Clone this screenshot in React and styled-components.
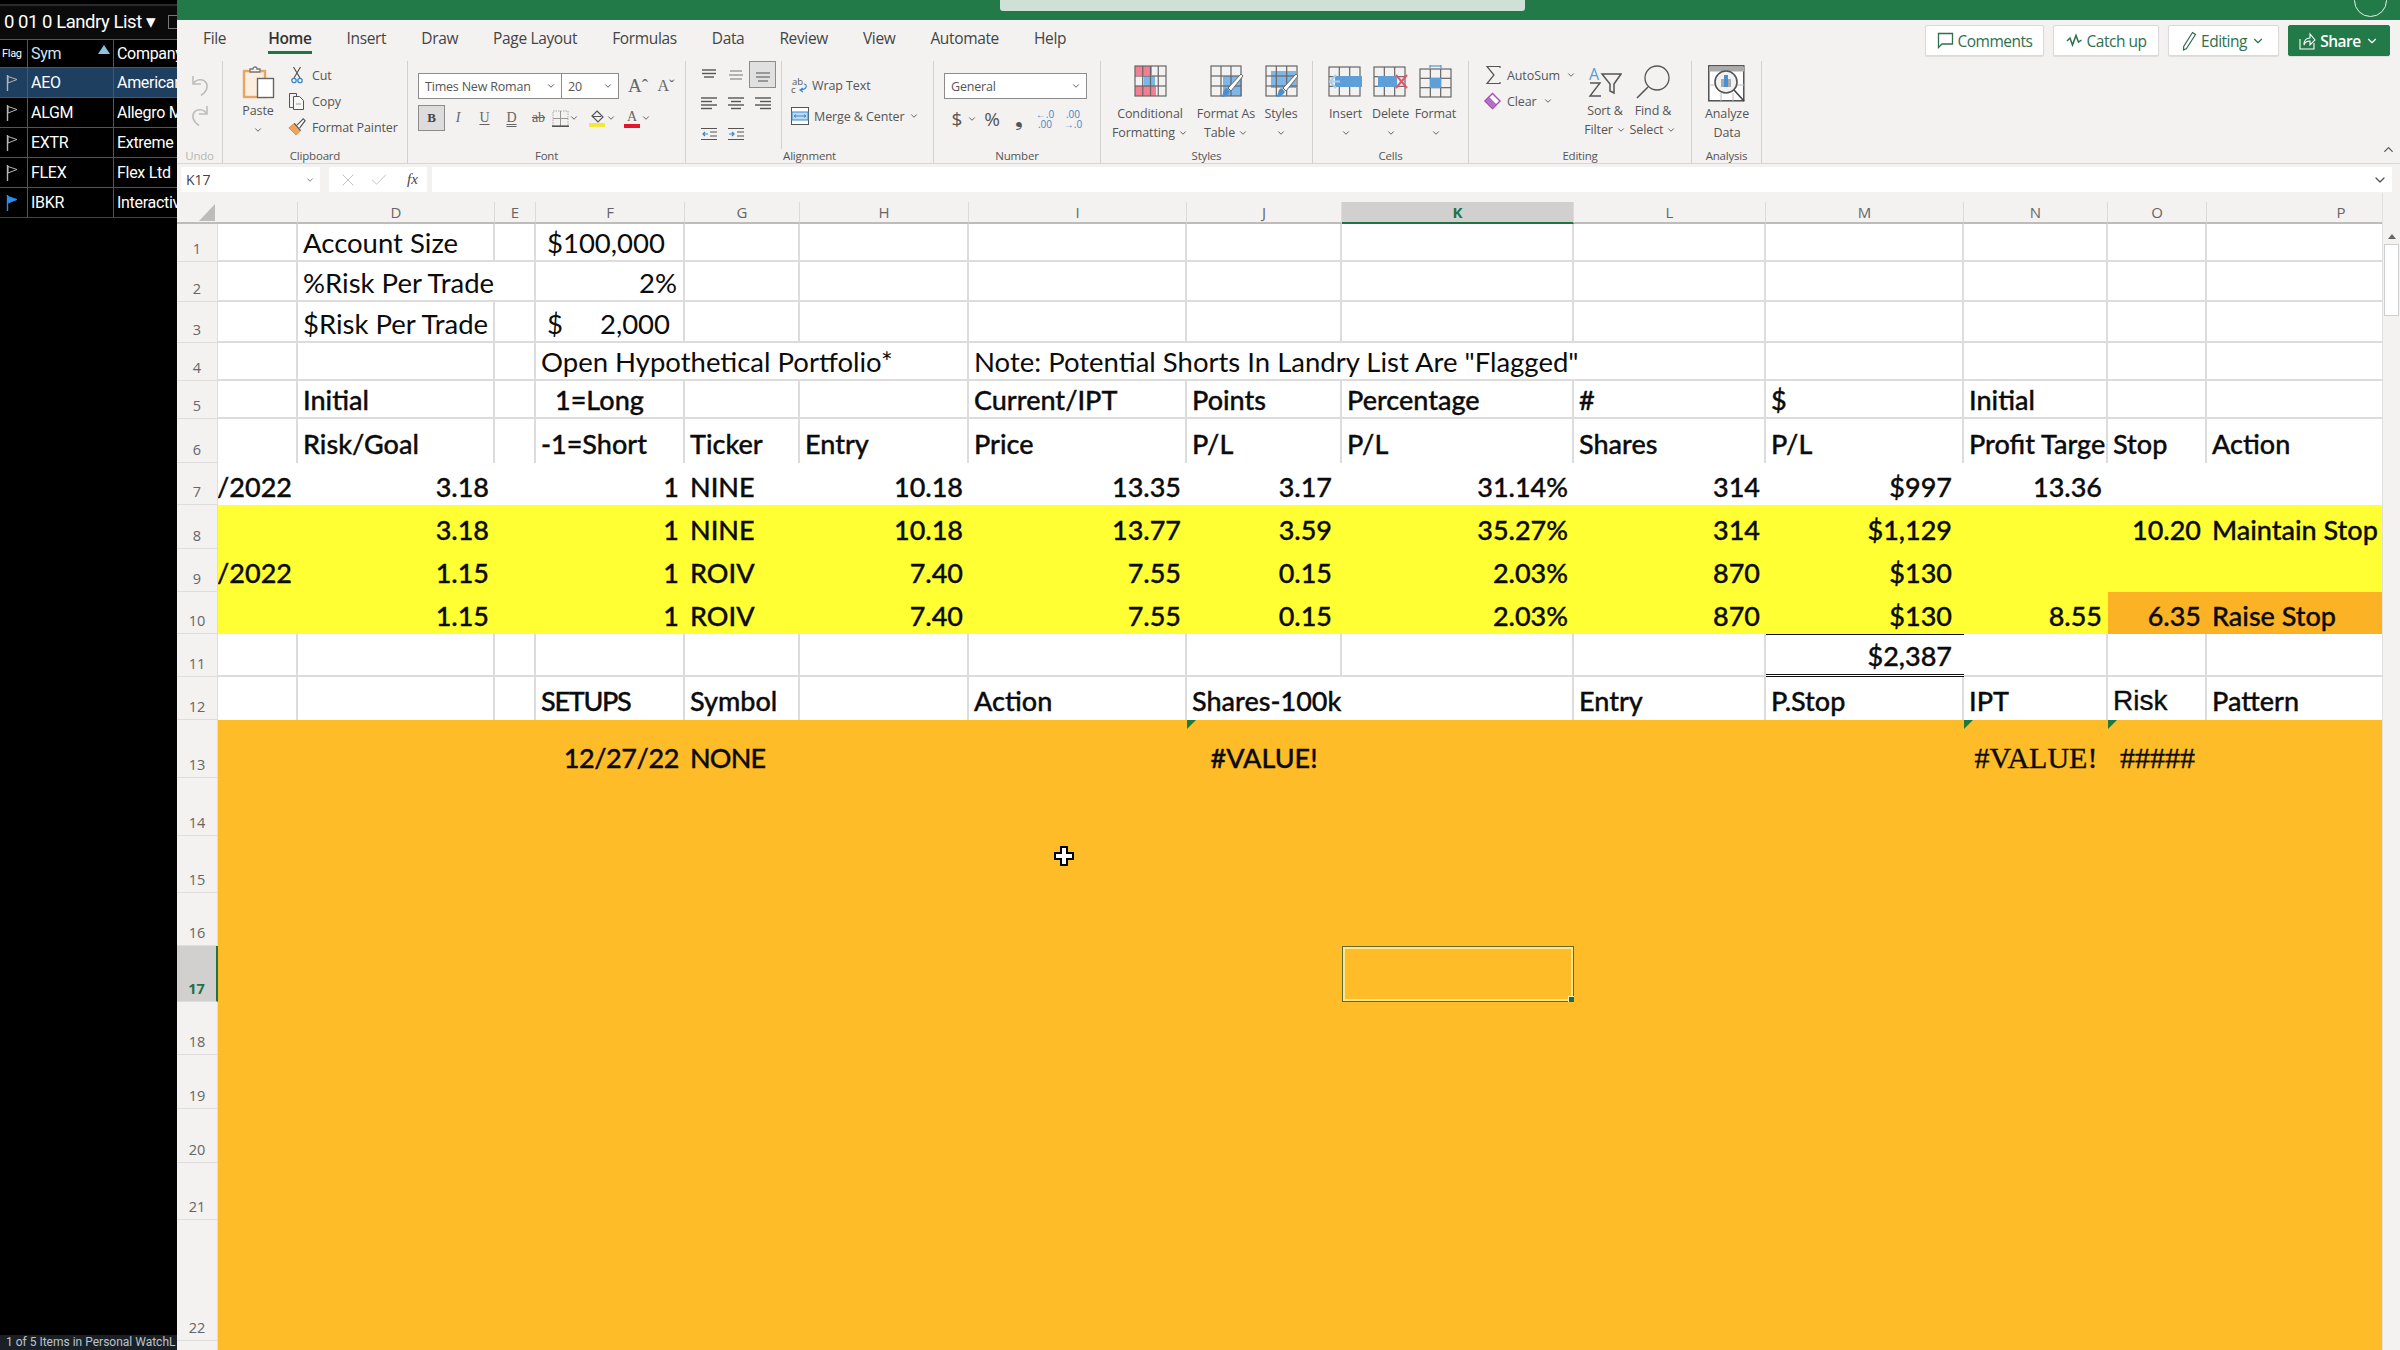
import React from "react";
import styled, { createGlobalStyle } from "styled-components";
import { ChevronDown, ChevronUp, X, Check } from "lucide-react";

const Global = createGlobalStyle`
  html, body { margin: 0; padding: 0; background: #000; }
  #root { width: 2400px; height: 1350px; overflow: hidden; }
  * { box-sizing: border-box; }
`;

const Page = styled.div`
  width: 2400px; height: 1350px; display: flex; overflow: hidden; position: relative;
  font-family: "Open Sans", "Liberation Sans", sans-serif;
`;

/* ---------- Left watchlist ---------- */
const Watch = styled.aside`
  width: 177px; flex: none; background: #000; color: #fff; display: flex; flex-direction: column;
  font-family: Roboto, "Liberation Sans", sans-serif; overflow: hidden;
`;
const WatchTop = styled.div`height: 6px; border-bottom: 2px solid #2c2c2c;`;
const WatchBar = styled.div`
  height: 33px; display: flex; align-items: center; justify-content: space-between; padding: 0 0 2px 4px;
  font-size: 18.5px; letter-spacing: -0.45px; white-space: nowrap; background: #0b0b0b;
`;
const WatchBox = styled.span`width: 12px; height: 14px; border: 1px solid #777; margin-right: -3px;`;
const WatchRow = styled.div`
  display: grid; grid-template-columns: 28px 86px 63px; height: ${p => p.$h}px;
  background: ${p => (p.$sel ? "#1e3f60" : "#000")}; border-top: 1px solid #555;
  font-size: 16px; letter-spacing: -0.3px;
`;
const WatchCell = styled.div`
  display: flex; align-items: center; padding-left: ${p => p.$pad ?? 3}px; overflow: hidden; white-space: nowrap;
  border-right: ${p => (p.$last ? "none" : "1px solid #555")}; color: ${p => p.$c || "#fff"};
  font-size: ${p => p.$fs || 16}px; position: relative;
`;
const SortArrow = styled.span`
  position: absolute; right: 3px; top: 5px; width: 0; height: 0;
  border-left: 6px solid transparent; border-right: 6px solid transparent; border-bottom: 9px solid #8fc4e0;
`;
const WatchFill = styled.div`flex: 1; border-top: 1px solid #444;`;
const WatchStatus = styled.div`
  height: 15px; background: #1b2026; color: #b9c6cf; font-size: 12px; line-height: 15px; padding-left: 6px;
  white-space: nowrap; overflow: hidden;
`;
const Flag = ({ on }) => (
  <svg width="12" height="16" viewBox="0 0 12 16">
    <path d="M1.500 0v16" stroke={on ? "#2a8cf0" : "#b5b5b5"} strokeWidth="1.4" />
    <path d="M2 1.500L11 4.500 2 8z" fill={on ? "#2a8cf0" : "none"} stroke={on ? "#2a8cf0" : "#b5b5b5"} />
  </svg>
);

/* ---------- Excel frame ---------- */
const Excel = styled.main`flex: 1; min-width: 0; display: flex; flex-direction: column; background: #f3f2f1;`;
const TitleBar = styled.header`
  height: 20px; flex: none; background: #217a48; display: flex; padding-left: 823px; overflow: hidden;
`;
const SearchBox = styled.div`width: 525px; height: 11px; background: #cfe0d5; border-radius: 0 0 3px 3px;`;
const Avatar = styled.span`
  width: 33px; height: 33px; border: 1px solid #e6f0ea; border-radius: 50%; margin: -16px 13px 0 auto;
`;

const TabRow = styled.nav`
  height: 41px; flex: none; display: flex; align-items: flex-start; padding-left: 26px;
`;
const Tab = styled.span`
  font-size: 15.500px; letter-spacing: -0.35px; color: #444; height: 34px; line-height: 36px; margin-right: ${p => p.$m}px;
  position: relative; font-weight: ${p => (p.$on ? 600 : 400)};
  ${p => p.$on && `color:#333; &::after{content:"";position:absolute;left:0;right:0;bottom:0;height:3px;background:#217346;}`}
`;
const Actions = styled.div`margin-left: auto; display: flex; gap: 9px; padding: 5px 10px 0 0;`;
const ActionBtn = styled.button`
  height: 31px; width: ${p => p.$w}px; border: 1px solid ${p => (p.$primary ? "#217a48" : "#dadada")};
  background: ${p => (p.$primary ? "#217a48" : "#fff")}; color: ${p => (p.$primary ? "#fff" : "#2f6f4e")};
  border-radius: 2px; display: flex; align-items: center; justify-content: center; gap: 4px; padding: 0;
  font: ${p => (p.$primary ? 600 : 400)} 15.500px "Open Sans", sans-serif; letter-spacing: -0.5px; box-shadow: 0 1px 1px #ddd;
`;

const Ribbon = styled.section`height: 102px; flex: none; display: flex; position: relative;`;
const Group = styled.div`
  width: ${p => p.$w}px; flex: none; display: flex; flex-direction: column; border-right: 1px solid #d3d1cf;
`;
const CollapseGroup = styled.div`flex: 1; display: flex; align-items: flex-end; justify-content: flex-end; padding: 0 4px 6px 0;`;
const GroupBody = styled.div`
  flex: 1; min-height: 0; display: flex; padding-left: ${p => p.$pad || 0}px;
  flex-direction: ${p => p.$col ? "column" : "row"};
`;
const GroupLabel = styled.div`
  height: 15px; line-height: 15px; font-size: 11.5px; color: ${p => p.$c || "#555"}; text-align: center; letter-spacing: -0.2px;
`;
const Stack = styled.div`
  display: flex; flex-direction: column; align-items: ${p => (p.$start ? "flex-start" : "center")};
  gap: ${p => p.$gap || 0}px; padding-top: ${p => p.$top || 0}px; width: ${p => p.$w}px; flex: none;
`;
const Small = styled.div`
  display: flex; align-items: center; height: 26px; gap: ${p => p.$gap ?? 6}px; font-size: 12.5px; color: #555; white-space: nowrap; letter-spacing: -0.1px;
  padding-left: ${p => p.$pad || 0}px;
`;
const IconSlot = styled.span`width: ${p => p.$w}px; display: inline-flex; justify-content: center; flex: none;`;
const Large = styled.div`
  width: ${p => p.$w}px; flex: none; display: flex; flex-direction: column; align-items: center; padding-top: 4px;
  font-size: 12.5px; line-height: 19px; color: #555; letter-spacing: -0.1px; white-space: nowrap;
`;
const LargeIcon = styled.div`height: 33px; margin-bottom: ${p => p.$gap ?? 6}px; display: flex; align-items: flex-start;`;
const LabelLine = styled.div`display: flex; align-items: center; gap: 3px; height: 19px;`;

const SelectBox = styled.div`
  height: 26px; width: ${p => p.$w}px; background: #fff; border: 1px solid #8c8c8c; display: flex; align-items: center; justify-content: space-between;
  font-size: 12.5px; color: #555; padding: 0 5px 0 6px; letter-spacing: -0.2px; flex: none;
  ${p => p.$join && "margin-left:-1px;"}
`;
const Row = styled.div`display: flex; align-items: center; margin-top: ${p => p.$mt || 0}px; margin-left: ${p => p.$ml || 0}px; gap: ${p => p.$gap || 0}px;`;
const BoldBtn = styled.span`
  width: 27px; height: 26px; background: #dcdcdc; border: 1px solid #8c8c8c; display: flex; align-items: center; justify-content: center;
  font: 700 13px "Liberation Serif", serif; color: #444;
`;
const FontGlyph = styled.span`
  width: ${p => p.$w}px; flex: none; text-align: center; font: ${p => p.$s || "normal"} ${p => p.$size || 14}px "Liberation Serif", serif; color: #666;
  margin-left: ${p => p.$ml || 0}px;
  text-decoration: ${p => p.$d || "none"}; text-underline-offset: 2px;
`;
const Glyph = styled.span`
  width: ${p => p.$w}px; flex: none; text-align: center; font: ${p => p.$size || 18}px "Open Sans", sans-serif; line-height: ${p => p.$lh || "normal"}; color: ${p => p.$c || "#555"};
`;
const Spacer = styled.span`width: ${p => p.$w}px; flex: none;`;
const ColorBar = styled.span`display:block;width:16px;height:4px;background:${p => p.$c};margin-top:-1px;`;
const ColorBtn = styled.span`display:flex;flex-direction:column;align-items:center;width:18px;flex:none;`;
const AlignGrid = styled.div`
  display: grid; grid-template-columns: repeat(3, 27px); grid-template-rows: 28px 30px 30px; width: 81px; flex: none;
`;
const AlignCell = styled.span`
  display: flex; align-items: center; justify-content: center;
  ${p => p.$on && "background:#e0e0e0;border:1px solid #8c8c8c;height:27px;padding-top:5px;"}
`;
const VRule = styled.span`width: 1px; height: 88px; background: #d3d1cf; margin: 0 8px 0 5px; flex: none;`;

const Chev = ({ s = 10, c = "#555" }) => <ChevronDown size={s} color={c} strokeWidth={2.2} />;

/* ---------- Icons ---------- */
const Icon = ({ w, h, children, vb }) => <svg width={w} height={h} viewBox={vb || `0 0 ${w} ${h}`} fill="none">{children}</svg>;
const UndoIcon = ({ flip }) => (
  <Icon w={20} h={26}><g transform={flip ? "matrix(-1 0 0 1 20 0)" : undefined} stroke="#bdbdbd" strokeWidth="1.6">
    <path d="M3 4v8h8" /><path d="M3.5 11.5C6 7 13 6.5 16 10.5c2.5 4 .5 10-5 13" /></g></Icon>
);
const PasteIcon = () => (
  <Icon w={33} h={34}>
    <rect x="2" y="6" width="21" height="26" fill="#fbeedd" stroke="#e9a55f" strokeWidth="2.4" />
    <path d="M8 7V4h3a2 2 0 014 0h3v3z" fill="#f3f2f1" stroke="#777" strokeWidth="1.3" />
    <rect x="15.5" y="13.5" width="16" height="19" fill="#fff" stroke="#666" strokeWidth="1.4" />
  </Icon>
);
const CutIcon = () => (
  <Icon w={12} h={18}>
    <path d="M2.5 1l6.5 11M9.5 1L3 12" stroke="#555" strokeWidth="1.2" />
    <circle cx="3" cy="14.5" r="2.2" stroke="#3b88c9" strokeWidth="1.3" /><circle cx="9" cy="14.5" r="2.2" stroke="#3b88c9" strokeWidth="1.3" />
  </Icon>
);
const CopyIcon = () => (
  <Icon w={18} h={18}>
    <path d="M1.5 1.5h7v14h-7z" stroke="#555" />
    <path d="M5.5 4.5h6l4 4v9h-10z" fill="#f8f8f8" stroke="#555" /><path d="M8 12h5" stroke="#999" />
  </Icon>
);
const PainterIcon = () => (
  <Icon w={20} h={20}>
    <path d="M1 11l6-5 7 8-5 5z" fill="#f0a35c" stroke="#e38a3a" /><path d="M7 6l7 8" stroke="#555" strokeWidth="1.3" />
    <path d="M10 8l7-7 2 2-6 8" stroke="#555" strokeWidth="1.3" fill="#fff" />
  </Icon>
);
const BorderIcon = () => (
  <Icon w={17} h={17}>
    <rect x="1" y="1" width="15" height="15" stroke="#aaa" strokeDasharray="1.5 1" /><path d="M8.5 1v15M1 8.5h15" stroke="#999" /><path d="M0 16.2h17" stroke="#444" strokeWidth="1.4" />
  </Icon>
);
const FillIcon = () => (
  <Icon w={16} h={14}><path d="M8 1l6 6-5 5-6-6z" stroke="#555" strokeWidth="1.2" /><path d="M3 6.5h9" stroke="#555" /></Icon>
);
const Lines = ({ rows, on }) => (
  <Icon w={18} h={14}>
    {rows.map(([x1, x2, y, c], i) => <path key={i} d={`M${x1} ${y}H${x2}`} stroke={c || (on ? "#666" : "#555")} strokeWidth="1.4" />)}
  </Icon>
);
const Indent = ({ right }) => (
  <Icon w={18} h={14}>
    <path d="M1 1.5h16M1 12.5h16M10 5h7M10 9h7" stroke="#555" strokeWidth="1.2" />
    {right ? <path d="M2 7h5M5 5l2 2-2 2" stroke="#3b88c9" strokeWidth="1.2" /> : <path d="M8 7H3M5 5L3 7l2 2" stroke="#3b88c9" strokeWidth="1.2" />}
  </Icon>
);
const WrapIcon = () => (
  <svg width="18" height="17" viewBox="0 0 18 17">
    <text x="1" y="8" fontSize="9.5" fill="#555" fontFamily="Open Sans">ab</text>
    <text x="0" y="16" fontSize="9.5" fill="#555" fontFamily="Open Sans">c</text>
    <path d="M13 7c3 0 4 5-3 6M12 11l-3 2 3 2" stroke="#3b88c9" fill="none" strokeWidth="1.2" />
  </svg>
);
const MergeIcon = () => (
  <Icon w={18} h={18}>
    <rect x=".5" y=".5" width="17" height="17" stroke="#555" fill="#fff" /><rect x="1" y="5" width="16" height="8" fill="#bcdcf3" stroke="#3b88c9" />
    <path d="M3 9h12M5 7.5L3 9l2 1.500M13 7.500L15 9l-2 1.500" stroke="#3b88c9" />
  </Icon>
);
const gridLines = (x, y, w, h, cols, rows, c = "#666") => (
  <g stroke={c} strokeWidth="1.2">
    <rect x={x} y={y} width={w} height={h} />
    {Array.from({ length: cols - 1 }, (_, i) => <path key={`c${i}`} d={`M${x + (w * (i + 1)) / cols} ${y}v${h}`} />)}
    {Array.from({ length: rows - 1 }, (_, i) => <path key={`r${i}`} d={`M${x} ${y + (h * (i + 1)) / rows}h${w}`} />)}
  </g>
);
const Brush = () => (
  <g>
    <path d="M20 27c-2 2-3 5-9 5 3-2 1-8 6-9z" fill="#4a90d0" /><path d="M18 23L31 9l2 2-12 15z" fill="#fff" stroke="#666" />
  </g>
);
const CFIcon = () => (
  <Icon w={33} h={33}>
    <path d="M1 1h17v9H1zM1 21h21v10H1z" fill="#f47f92" /><path d="M10 11h11v10H10z" fill="#7db6e8" />
    {gridLines(1, 1, 31, 30, 4, 3)}
  </Icon>
);
const TableIcon = () => (
  <Icon w={33} h={33}><path d="M13 11h19v20H13z" fill="#7db6e8" />{gridLines(1, 1, 30, 30, 3, 3)}<Brush /></Icon>
);
const StylesIcon = () => (
  <Icon w={33} h={33}><path d="M6 6h25v17H6z" fill="#7db6e8" />{gridLines(1, 1, 31, 30, 3, 3)}<Brush /></Icon>
);
const InsertIcon = () => (
  <Icon w={35} h={33}>
    {gridLines(1, 2, 31, 29, 3, 3)}<path d="M7 11h27v11H7z" fill="#5f9fd8" />
    <path d="M12 16.500H3M8 10l-6 6.500 6 6.500" stroke="#a8cff0" strokeWidth="2" />
  </Icon>
);
const DeleteIcon = () => (
  <Icon w={35} h={33}>
    {gridLines(1, 2, 31, 29, 3, 3)}<path d="M5 11h19v11H5z" fill="#5f9fd8" /><path d="M23 10l11 13M34 10L23 23" stroke="#e0566a" strokeWidth="2" />
  </Icon>
);
const FormatIcon = () => (
  <Icon w={33} h={33}>
    <path d="M11 1h11M11 -1v4M22 -1v4" stroke="#3b88c9" />
    {gridLines(1, 4, 31, 28, 3, 3)}<path d="M11 13h11v10H11z" fill="#5f9fd8" />
  </Icon>
);
const SigmaIcon = () => <Icon w={16} h={20}><path d="M15 3V1.500H2L9 10l-7 8.500h13V17" stroke="#555" strokeWidth="1.2" /></Icon>;
const EraserIcon = () => (
  <Icon w={18} h={18}><path d="M1 9l8-8 8 8-8 8z" fill="#fff" stroke="#a24bb5" strokeWidth="1.5" /><path d="M1 9l4-4 8 8-4 4z" fill="#b96cc8" stroke="#a24bb5" /></Icon>
);
const SortIcon = () => (
  <svg width="34" height="34" viewBox="0 0 34 34" fill="none">
    <text x="1" y="15" fontSize="16" fill="#5a9bd5" fontFamily="Open Sans">A</text>
    <path d="M2 18h10L2 31h11" stroke="#555" strokeWidth="1.4" />
    <path d="M14 9h19l-7 10v9l-4-2v-7z" stroke="#555" strokeWidth="1.5" />
  </svg>
);
const FindIcon = () => <Icon w={34} h={34}><circle cx="21" cy="13" r="12" stroke="#555" strokeWidth="1.3" /><path d="M12 22L1 33" stroke="#555" strokeWidth="1.6" /></Icon>;
const AnalyzeIcon = () => (
  <Icon w={38} h={37}>
    <rect x=".8" y=".8" width="35" height="35" stroke="#444" strokeWidth="1.4" fill="#fff" /><path d="M1 4h35" stroke="#aaa" strokeWidth="5" />
    <path d="M1 20h35M13 28v8M25 28v8" stroke="#bbb" />
    <circle cx="18" cy="17" r="11" fill="#f3f2f1" stroke="#555" strokeWidth="1.6" />
    <path d="M13 14h3v8h-3zM20 14h3v8h-3z" fill="#aaa" /><path d="M16 10h4v12h-4z" fill="#4a90d0" />
    <path d="M26 25l10 11" stroke="#444" strokeWidth="1.6" />
  </Icon>
);
const CommentIcon = () => <Icon w={17} h={17}><path d="M1.500 1.500h14v10.500H5l-3.500 3.500z" stroke="#2f6f4e" strokeWidth="1.3" /></Icon>;
const PulseIcon = () => <Icon w={17} h={15}><path d="M1 8l3-3 2.500 7L10 2.500 12.500 9l3-2" stroke="#2f6f4e" strokeWidth="1.5" /></Icon>;
const PenIcon = () => <Icon w={15} h={20}><path d="M10.500 1.500l3 2-9 14-3 1.500.2-3.500z" stroke="#2f6f4e" strokeWidth="1.2" /></Icon>;
const ShareIcon = () => <Icon w={17} h={19}><path d="M1 8v10h14v-6" stroke="#fff" strokeWidth="1.1" /><path d="M5 14c0-5 3-7 6-7V3l5 6-5 5v-4c-3 0-5 1-6 4z" stroke="#fff" strokeWidth="1.1" /></Icon>;

/* ---------- Formula bar ---------- */
const FormulaBar = styled.div`
  height: 30px; flex: none; display: flex; align-items: flex-start; padding: 3px 8px 0 4px; gap: 5px; border-top: 1px solid #d9d8d7; background: #f3f2f1;
`;
const NameBox = styled.div`
  width: 139px; height: 25px; background: #fff; display: flex; align-items: center; justify-content: space-between; padding: 0 5px 0 5px; font-size: 14px; color: #444;
`;
const FxBox = styled.div`
  width: 98px; margin-left: 4px; height: 25px; background: #fff; display: flex; align-items: center; gap: 11px; padding-left: 9px; color: #c4c4c4;
`;
const FxText = styled.span`font: italic 15px "Liberation Serif", serif; color: #444; margin-left: 7px;`;
const FormulaInput = styled.div`flex: 1; height: 25px; background: #fff; display: flex; align-items: center; justify-content: flex-end; padding-right: 4px;`;

/* ---------- Sheet ---------- */
const Content = styled.div`flex: 1; min-height: 0; display: flex; position: relative;`;
const columns = [["C", 80], ["D", 197], ["E", 41], ["F", 149], ["G", 115], ["H", 169], ["I", 218], ["J", 155], ["K", 232], ["L", 192], ["M", 198], ["N", 144], ["O", 99], ["P", 175]];
const Sheet = styled.div`
  width: 2205px; flex: none; display: grid; overflow: hidden;
  grid-template-columns: ${p => p.$cols};
  grid-template-rows: ${p => p.$rows};
`;
const Corner = styled.div`
  padding: 11px 0 0 22px; border-bottom: 2px solid #bdbcbb;
`;
const ColHead = styled.div`
  margin-top: 9px; font-size: 15px; line-height: 20px; text-align: center; color: ${p => (p.$on ? "#217346" : "#666")}; font-weight: ${p => (p.$on ? 700 : 400)};
  background: ${p => (p.$on ? "#d2d0ce" : "transparent")}; border-right: ${p => (p.$last ? "none" : "1px solid #dcdbda")};
  border-bottom: 2px solid ${p => (p.$on ? "#217346" : "#bdbcbb")};
`;
const OverflowLetter = styled.span`position: absolute; left: ${p => p.$x}px; top: 9px; width: 20px; text-align: center; font-size: 15px; line-height: 20px; color: #666;`;
const RowHead = styled.div`
  display: flex; align-items: flex-end; justify-content: center; padding-bottom: 2px; font-size: 14.500px; line-height: 20px;
  color: ${p => (p.$on ? "#217346" : "#666")}; font-weight: ${p => (p.$on ? 700 : 400)};
  background: ${p => (p.$on ? "#d2d0ce" : "#f3f2f1")};
  border-bottom: 1px solid #dedddc; border-right: ${p => (p.$on ? "2px solid #217346" : "1px solid #dedddc")};
`;
const fills = { plain: "#fff", white: "#fff", yellow: "#ffff33", orange: "#fdbc28", deep: "#fbb224" };
const Cell = styled.div`
  grid-column: span ${p => p.$span || 1}; min-width: 0; display: flex; align-items: flex-end; position: relative; white-space: nowrap;
  overflow: ${p => (p.$open ? "visible" : "hidden")};
  justify-content: ${p => ({ right: "flex-end", center: "center", between: "space-between" }[p.$a] || "flex-start")};
  padding: 0 ${p => p.$pr ?? 6}px ${p => p.$pb ?? 2}px ${p => p.$pl ?? 5}px;
  background: ${p => fills[p.$fill]}; color: #0c0c0c;
  font-family: ${p => p.$serif ? '"Liberation Serif", serif' : p.$arial ? '"Liberation Sans", sans-serif' : 'Lato, Carlito, sans-serif'};
  font-size: ${p => p.$fs || 27}px; line-height: 30px; letter-spacing: ${p => p.$ls || 0}px; font-weight: ${p => (p.$strong ? 500 : 400)};
  ${p => p.$strong && "-webkit-text-stroke: 0.35px #0c0c0c;"}
  border-right: ${p => (p.$grid ? "2px solid #dcdcdc" : "none")};
  border-bottom: ${p => (p.$hline ? "2px solid #dcdcdc" : "none")};
  ${p => p.$total && "border-top: 1px solid #111; border-bottom: 3px double #111; border-right: none;"}
`;
const ErrorMark = styled.i`
  position: absolute; left: 0; top: 0; width: 0; height: 0;
  border-top: 9px solid #1f7a3a; border-right: 9px solid transparent;
`;
const Selection = styled.div`
  position: absolute; inset: 0; border: 1px solid #5f6a2c; box-shadow: inset 0 0 0 2px #fde68a;
  &::after { content: ""; position: absolute; right: -3px; bottom: -3px; width: 6px; height: 6px; background: #1c6b55; border: 1px solid #fff3b8; }
`;
const Scrollbar = styled.div`
  flex: 1; display: flex; flex-direction: column; padding-top: 31px; background: #f3f2f1; border-left: 1px solid #e0e0e0;
`;
const ScrollUp = styled.div`
  height: 15px; display: flex; align-items: center; justify-content: center; margin-top: 5px;
  &::before { content: ""; border-left: 4px solid transparent; border-right: 4px solid transparent; border-bottom: 5px solid #666; }
`;
const ScrollThumb = styled.div`height: 72px; background: #fff; border: 1px solid #cfcfcf; margin: 0 1px;`;
const Cursor = styled.svg`position: absolute; left: 1054px; top: 846px;`;

const r = v => ({ v, a: "right" });
const j = v => ({ v, a: "right", pr: 10 });
const m = v => ({ v, a: "right", pr: 12 });
const rowsData = [
  { n: 1, h: 38, kind: "plain", fs: 27.5, cells: { D: "Account Size", F: { v: "$100,000", pl: 11 } } },
  { n: 2, h: 40, kind: "plain", fs: 27.5, cells: { D: { v: "%Risk Per Trade", span: 2 }, F: r("2%") } },
  { n: 3, h: 41, kind: "plain", fs: 27.5, cells: { D: "$Risk Per Trade", F: { v: ["$", "2,000"], a: "between", pl: 11, pr: 13 } } },
  { n: 4, h: 38, kind: "plain", fs: 27.5, cells: { F: { v: "Open Hypothetical Portfolio*", span: 3 }, I: { v: 'Note: Potential Shorts In Landry List Are "Flagged"', span: 4 } } },
  { n: 5, h: 38, kind: "plain", strong: 1, cells: { D: "Initial", F: { v: "1=Long", pl: 19 }, I: "Current/IPT", J: "Points", K: "Percentage", L: "#", M: "$", N: "Initial" } },
  { n: 6, h: 44, kind: "plain", strong: 1, pb: 4, nobottom: 1, cells: { D: "Risk/Goal", F: "-1=Short", G: "Ticker", H: "Entry", I: "Price", J: "P/L", K: "P/L", L: "Shares", M: "P/L", N: "Profit Targe", O: "Stop", P: "Action" } },
  { n: 7, h: 42, kind: "white", strong: 1, pb: 3, cells: { C: r("/2022"), D: r("3.18"), F: r("1"), G: "NINE", H: r("10.18"), I: r("13.35"), J: j("3.17"), K: r("31.14%"), L: r("314"), M: m("$997"), N: r("13.36") } },
  { n: 8, h: 44, kind: "yellow", strong: 1, pb: 4, cells: { D: r("3.18"), F: r("1"), G: "NINE", H: r("10.18"), I: r("13.77"), J: j("3.59"), K: r("35.27%"), L: r("314"), M: m("$1,129"), O: r("10.20"), P: { v: "Maintain Stop", pr: 0 } } },
  { n: 9, h: 43, kind: "yellow", strong: 1, pb: 4, cells: { C: r("/2022"), D: r("1.15"), F: r("1"), G: "ROIV", H: r("7.40"), I: r("7.55"), J: j("0.15"), K: r("2.03%"), L: r("870"), M: m("$130") } },
  { n: 10, h: 42, kind: "yellow", strong: 1, pb: 3, cells: { D: r("1.15"), F: r("1"), G: "ROIV", H: r("7.40"), I: r("7.55"), J: j("0.15"), K: r("2.03%"), L: r("870"), M: m("$130"), N: r("8.55"), O: { ...r("6.35"), fill: "deep" }, P: { v: "Raise Stop", fill: "deep" } } },
  { n: 11, h: 43, kind: "plain", strong: 1, pb: 3, cells: { M: { ...m("$2,387"), total: 1 } } },
  { n: 12, h: 43, kind: "plain", strong: 1, pb: 4, nobottom: 1, cells: { F: { v: "SETUPS", ls: -1.3 }, G: "Symbol", I: "Action", J: { v: "Shares-100k", span: 2 }, L: "Entry", M: "P.Stop", N: "IPT", O: { v: "Risk", arial: 1, fs: 28 }, P: "Pattern" } },
  { n: 13, h: 58, kind: "orange", strong: 1, cells: { F: { ...r("12/27/22"), bump: 1, ls: -0.4 }, G: { v: "NONE", bump: 1, ls: -0.8 }, J: { v: "#VALUE!", a: "center", mark: 1, bump: 1 }, N: { v: "#VALUE!", a: "center", serif: 1, fs: 30, mark: 1, bump: 1, pl: 0, pr: 0 }, O: { v: "#####", a: "center", serif: 1, fs: 30, mark: 1, bump: 1, pl: 0, pr: 0 } } },
  { n: 14, h: 58, kind: "orange", cells: {} },
  { n: 15, h: 57, kind: "orange", cells: {} },
  { n: 16, h: 53, kind: "orange", cells: {} },
  { n: 17, h: 56, kind: "orange", cells: { K: { sel: 1 } } },
  { n: 18, h: 53, kind: "orange", cells: {} },
  { n: 19, h: 54, kind: "orange", cells: {} },
  { n: 20, h: 54, kind: "orange", cells: {} },
  { n: 21, h: 57, kind: "orange", cells: {} },
  { n: 22, h: 121, kind: "orange", cells: {} },
  { n: "", h: 10, kind: "orange", cells: {} },
];
const BumpText = styled.span`position: relative; top: -3px;`;

function SheetRow({ row }) {
  const out = [<RowHead key="h" $on={row.n === 17}>{row.n}</RowHead>];
  let skip = 0;
  columns.forEach(([col]) => {
    if (skip > 0) { skip--; return; }
    const raw = row.cells[col];
    const c = typeof raw === "string" ? { v: raw } : raw || {};
    const span = c.span || 1;
    skip = span - 1;
    const isPlain = row.kind === "plain";
    const val = Array.isArray(c.v) ? c.v.map(t => <span key={t}>{t}</span>) : c.v;
    out.push(
      <Cell key={col} $span={span} $a={c.a} $pl={c.pl} $pr={c.pr} $pb={row.pb} $fill={c.fill || row.kind} $ls={c.ls}
        $strong={row.strong} $grid={isPlain && !c.total && col !== "P"} $hline={isPlain && !row.nobottom} $total={c.total}
        $serif={c.serif} $arial={c.arial} $fs={c.fs || row.fs} $open={c.sel}>
        {c.mark && <ErrorMark />}
        {c.sel && <Selection />}
        {c.bump ? <BumpText>{val}</BumpText> : val}
      </Cell>
    );
  });
  return out;
}

const iconLines = {
  top: [[2, 16, 2], [2, 16, 5.500], [4, 14, 9, "#555"]],
  mid: [[3, 15, 3, "#999"], [2, 16, 7, "#999"], [3, 15, 11, "#999"]],
  bot: [[2, 16, 3, "#777"], [2, 16, 7, "#777"], [4, 14, 11, "#777"]],
  left: [[1, 17, 1], [1, 12, 4.500], [1, 17, 8], [1, 12, 11.500]],
  center: [[1, 17, 1], [4, 14, 4.500], [1, 17, 8], [4, 14, 11.500]],
  right: [[1, 17, 1], [6, 17, 4.500], [1, 17, 8], [6, 17, 11.500]],
};

export default function App() {
  const rowTemplate = ["31px", ...rowsData.map(x => `${x.h}px`)].join(" ");
  const colTemplate = ["41px", ...columns.map(c => `${c[1]}px`)].join(" ");
  return (
    <Page>
      <Global />
      <Watch>
        <WatchTop />
        <WatchBar>0 01 0 Landry List ▾<WatchBox /></WatchBar>
        <WatchRow $h={28}>
          <WatchCell $fs={11} $pad={2}>Flag</WatchCell>
          <WatchCell $c="#cfe3ee">Sym<SortArrow /></WatchCell>
          <WatchCell $last>Company</WatchCell>
        </WatchRow>
        {[["AEO", "American", 1], ["ALGM", "Allegro M"], ["EXTR", "Extreme"], ["FLEX", "Flex Ltd"], ["IBKR", "Interactiv", 0, 1]].map(([s, c, sel, on]) => (
          <WatchRow key={s} $h={30} $sel={sel}>
            <WatchCell $pad={6}><Flag on={on} /></WatchCell>
            <WatchCell>{s}</WatchCell>
            <WatchCell $last>{c}</WatchCell>
          </WatchRow>
        ))}
        <WatchFill />
        <WatchStatus>1 of 5 Items in Personal WatchL</WatchStatus>
      </Watch>

      <Excel>
        <TitleBar><SearchBox /><Avatar /></TitleBar>
        <TabRow>
          <Tab $m={42}>File</Tab><Tab $on $m={35}>Home</Tab><Tab $m={35}>Insert</Tab><Tab $m={35}>Draw</Tab><Tab $m={35}>Page Layout</Tab>
          <Tab $m={35}>Formulas</Tab><Tab $m={35}>Data</Tab><Tab $m={35}>Review</Tab><Tab $m={35}>View</Tab><Tab $m={35}>Automate</Tab><Tab $m={0}>Help</Tab>
          <Actions>
            <ActionBtn $w={119}><CommentIcon />Comments</ActionBtn>
            <ActionBtn $w={106}><PulseIcon />Catch up</ActionBtn>
            <ActionBtn $w={111}><PenIcon />Editing <ChevronDown size={14} color="#2f6f4e" /></ActionBtn>
            <ActionBtn $w={102} $primary><ShareIcon />Share <ChevronDown size={14} color="#fff" /></ActionBtn>
          </Actions>
        </TabRow>

        <Ribbon>
          <Group $w={46}>
            <GroupBody><Stack $w={46} $top={11} $gap={4}><UndoIcon /><UndoIcon flip /></Stack></GroupBody>
            <GroupLabel $c="#b5b5b5">Undo</GroupLabel>
          </Group>
          <Group $w={185}>
            <GroupBody $pad={17}>
              <Large $w={36}>
                <LargeIcon $gap={3}><PasteIcon /></LargeIcon>
                <LabelLine>Paste</LabelLine><LabelLine><Chev /></LabelLine>
              </Large>
              <Stack $w={120} $top={1} $start>
                <Small $gap={6} $pad={12}><IconSlot $w={18}><CutIcon /></IconSlot>Cut</Small>
                <Small $gap={6} $pad={12}><IconSlot $w={18}><CopyIcon /></IconSlot>Copy</Small>
                <Small $gap={6} $pad={12}><IconSlot $w={18}><PainterIcon /></IconSlot>Format Painter</Small>
              </Stack>
            </GroupBody>
            <GroupLabel>Clipboard</GroupLabel>
          </Group>
          <Group $w={278}>
            <GroupBody $pad={10} $col>
              <Row $mt={12}>
                <SelectBox $w={144}>Times New Roman <Chev /></SelectBox>
                <SelectBox $w={58} $join>20 <Chev /></SelectBox>
                <FontGlyph $w={30} $size={19} $ml={4}>Aˆ</FontGlyph>
                <FontGlyph $w={26} $size={16}>Aˇ</FontGlyph>
              </Row>
              <Row $mt={6}>
                <BoldBtn>B</BoldBtn>
                <FontGlyph $w={26} $s="italic">I</FontGlyph>
                <FontGlyph $w={27} $d="underline">U</FontGlyph>
                <FontGlyph $w={27} $d="underline double">D</FontGlyph>
                <FontGlyph $w={27} $d="line-through">ab</FontGlyph>
                <BorderIcon /><Chev />
                <Spacer $w={9} />
                <ColorBtn><FillIcon /><ColorBar $c="#f5e83a" /></ColorBtn><Chev />
                <Spacer $w={7} />
                <ColorBtn><FontGlyph $w={16} $size={14}>A</FontGlyph><ColorBar $c="#e3162b" /></ColorBtn><Chev />
              </Row>
            </GroupBody>
            <GroupLabel>Font</GroupLabel>
          </Group>
          <Group $w={248}>
            <GroupBody $pad={9}>
              <AlignGrid>
                <AlignCell><Lines rows={iconLines.top} /></AlignCell>
                <AlignCell><Lines rows={iconLines.mid} /></AlignCell>
                <AlignCell $on><Lines rows={iconLines.bot} on /></AlignCell>
                <AlignCell><Lines rows={iconLines.left} /></AlignCell>
                <AlignCell><Lines rows={iconLines.center} /></AlignCell>
                <AlignCell><Lines rows={iconLines.right} /></AlignCell>
                <AlignCell><Indent /></AlignCell>
                <AlignCell><Indent right /></AlignCell>
              </AlignGrid>
              <VRule />
              <Stack $w={140} $top={11} $gap={5} $start>
                <Small $gap={2}><IconSlot $w={20}><WrapIcon /></IconSlot>Wrap Text</Small>
                <Small $gap={4}><IconSlot $w={20}><MergeIcon /></IconSlot>Merge &amp; Center <Chev /></Small>
              </Stack>
            </GroupBody>
            <GroupLabel>Alignment</GroupLabel>
          </Group>
          <Group $w={167}>
            <GroupBody $pad={10} $col>
              <Row $mt={12}><SelectBox $w={143}>General <Chev /></SelectBox></Row>
              <Row $mt={6} $ml={3}>
                <Glyph $w={20} $size={19}>$</Glyph><Chev />
                <Glyph $w={30} $size={19}>%</Glyph>
                <Glyph $w={24} $size={20}>❟</Glyph>
                <Glyph $w={28} $size={10} $lh="10px" $c="#3b88c9">←.0<br />.00</Glyph>
                <Glyph $w={28} $size={10} $lh="10px" $c="#3b88c9">.00<br />→.0</Glyph>
              </Row>
            </GroupBody>
            <GroupLabel>Number</GroupLabel>
          </Group>
          <Group $w={212}>
            <GroupBody $pad={6}>
              <Large $w={86}><LargeIcon><CFIcon /></LargeIcon><LabelLine>Conditional</LabelLine><LabelLine>Formatting <Chev /></LabelLine></Large>
              <Large $w={66}><LargeIcon><TableIcon /></LargeIcon><LabelLine>Format As</LabelLine><LabelLine>Table <Chev /></LabelLine></Large>
              <Large $w={44}><LargeIcon><StylesIcon /></LargeIcon><LabelLine>Styles</LabelLine><LabelLine><Chev /></LabelLine></Large>
            </GroupBody>
            <GroupLabel>Styles</GroupLabel>
          </Group>
          <Group $w={156}>
            <GroupBody $pad={10}>
              <Large $w={45}><LargeIcon><InsertIcon /></LargeIcon><LabelLine>Insert</LabelLine><LabelLine><Chev /></LabelLine></Large>
              <Large $w={45}><LargeIcon><DeleteIcon /></LargeIcon><LabelLine>Delete</LabelLine><LabelLine><Chev /></LabelLine></Large>
              <Large $w={45}><LargeIcon><FormatIcon /></LargeIcon><LabelLine>Format</LabelLine><LabelLine><Chev /></LabelLine></Large>
            </GroupBody>
            <GroupLabel>Cells</GroupLabel>
          </Group>
          <Group $w={223}>
            <GroupBody $pad={15}>
              <Stack $w={97} $top={1} $start>
                <Small $gap={6}><IconSlot $w={17}><SigmaIcon /></IconSlot>AutoSum <Chev /></Small>
                <Small $gap={6}><IconSlot $w={17}><EraserIcon /></IconSlot>Clear <Chev /></Small>
              </Stack>
              <Large $w={48}><LargeIcon $gap={3}><SortIcon /></LargeIcon><LabelLine>Sort &amp;</LabelLine><LabelLine>Filter <Chev /></LabelLine></Large>
              <Large $w={48}><LargeIcon $gap={3}><FindIcon /></LargeIcon><LabelLine>Find &amp;</LabelLine><LabelLine>Select <Chev /></LabelLine></Large>
            </GroupBody>
            <GroupLabel>Editing</GroupLabel>
          </Group>
          <Group $w={70}>
            <GroupBody><Large $w={70}><LargeIcon><AnalyzeIcon /></LargeIcon><LabelLine>Analyze</LabelLine><LabelLine>Data</LabelLine></Large></GroupBody>
            <GroupLabel>Analysis</GroupLabel>
          </Group>
          <CollapseGroup><ChevronUp size={15} color="#555" /></CollapseGroup>
        </Ribbon>

        <FormulaBar>
          <NameBox>K17 <Chev c="#777" /></NameBox>
          <FxBox><X size={20} strokeWidth={1.2} /><Check size={20} strokeWidth={1.2} /><FxText>fx</FxText></FxBox>
          <FormulaInput><ChevronDown size={16} color="#555" /></FormulaInput>
        </FormulaBar>

        <Content>
          <Sheet $cols={colTemplate} $rows={rowTemplate}>
            <Corner><svg width="16" height="17" viewBox="0 0 16 17"><path d="M16 0v17H0z" fill="#bdbcbb" /></svg></Corner>
            {columns.map(([c]) => (
              <ColHead key={c} $on={c === "K"} $last={c === "P"}>{c === "C" || c === "P" ? "" : c}</ColHead>
            ))}
            {rowsData.map(row => <SheetRow key={row.n} row={row} />)}
          </Sheet>
          <Scrollbar><ScrollUp /><ScrollThumb /></Scrollbar>
          <OverflowLetter $x={2154}>P</OverflowLetter>
        </Content>
      </Excel>

      <Cursor width="20" height="20" viewBox="0 0 20 20">
        <path d="M7 1h6v6h6v6h-6v6H7v-6H1V7h6z" fill="#fff" stroke="#000" strokeWidth="2" />
      </Cursor>
    </Page>
  );
}
